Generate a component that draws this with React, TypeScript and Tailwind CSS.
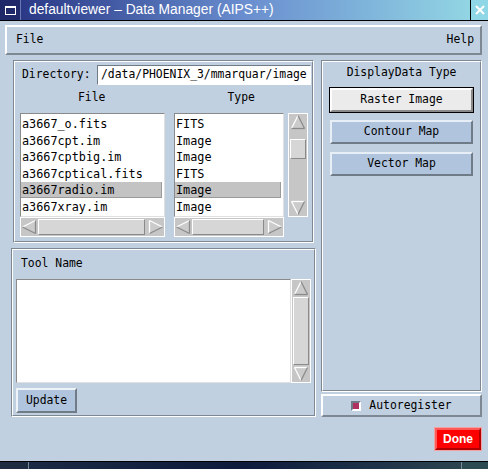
import React from "react";

type Dir = "l" | "r" | "u" | "d";

function Arrow({ dir }: { dir: Dir }) {
  const L = "#ffffff";
  const D = "#8a8a8a";
  const F = "#cbcbcb";
  let content: React.ReactNode = null;
  if (dir === "l") {
    content = (
      <>
        <polygon points="1.5,8 14.5,1.5 14.5,14.5" fill={F} />
        <line x1="1.5" y1="8" x2="14.5" y2="1.5" stroke={L} strokeWidth="1.3" />
        <line x1="1.5" y1="8" x2="14.5" y2="14.5" stroke={D} strokeWidth="1.3" />
        <line x1="14.5" y1="1.5" x2="14.5" y2="14.5" stroke={D} strokeWidth="1.3" />
      </>
    );
  } else if (dir === "r") {
    content = (
      <>
        <polygon points="14.5,8 1.5,1.5 1.5,14.5" fill={F} />
        <line x1="1.5" y1="1.5" x2="14.5" y2="8" stroke={L} strokeWidth="1.3" />
        <line x1="1.5" y1="1.5" x2="1.5" y2="14.5" stroke={L} strokeWidth="1.3" />
        <line x1="1.5" y1="14.5" x2="14.5" y2="8" stroke={D} strokeWidth="1.3" />
      </>
    );
  } else if (dir === "u") {
    content = (
      <>
        <polygon points="8,1.5 1.5,14.5 14.5,14.5" fill={F} />
        <line x1="8" y1="1.5" x2="1.5" y2="14.5" stroke={L} strokeWidth="1.3" />
        <line x1="8" y1="1.5" x2="14.5" y2="14.5" stroke={D} strokeWidth="1.3" />
        <line x1="1.5" y1="14.5" x2="14.5" y2="14.5" stroke={D} strokeWidth="1.3" />
      </>
    );
  } else {
    content = (
      <>
        <polygon points="8,14.5 1.5,1.5 14.5,1.5" fill={F} />
        <line x1="1.5" y1="1.5" x2="14.5" y2="1.5" stroke={L} strokeWidth="1.3" />
        <line x1="1.5" y1="1.5" x2="8" y2="14.5" stroke={L} strokeWidth="1.3" />
        <line x1="14.5" y1="1.5" x2="8" y2="14.5" stroke={D} strokeWidth="1.3" />
      </>
    );
  }
  return (
    <svg width="16" height="16" viewBox="0 0 16 16" className="block shrink-0">
      {content}
    </svg>
  );
}

function Slider({ className }: { className: string }) {
  return (
    <div
      className={
        "bg-[#d6d6d6] border border-t-white border-l-white border-b-[#8a8a8a] border-r-[#8a8a8a] " +
        className
      }
    />
  );
}

function HScroll() {
  return (
    <div className="h-[20px] border border-white bg-[#c6c6c6] flex items-center">
      <Arrow dir="l" />
      <Slider className="flex-1 h-[16px] ml-[1px] mr-[3px]" />
      <Arrow dir="r" />
    </div>
  );
}

function Groove({ className, children }: { className: string; children?: React.ReactNode }) {
  return (
    <div
      className={
        "border border-t-[#7d8893] border-l-[#7d8893] border-b-white border-r-white " + className
      }
    >
      <div className="h-full border border-t-white border-l-white border-b-[#7d8893] border-r-[#7d8893] flex flex-col">
        {children}
      </div>
    </div>
  );
}

function Row({ text, sel }: { text: string; sel?: boolean }) {
  return (
    <div
      className={
        sel
          ? "h-[16.6px] leading-[15px] pt-[1.5px] mr-[2px] pl-[1px] bg-[#c3c3c3] border-b border-r border-[#9a9a9a] whitespace-nowrap"
          : "h-[16.6px] leading-[15px] pt-[1.5px] mr-[2px] pl-[1px] whitespace-nowrap"
      }
    >
      {text}
    </div>
  );
}

function TypeButton({ label, selected }: { label: string; selected?: boolean }) {
  return (
    <div
      className={
        selected
          ? "h-[26px] border border-black"
          : "h-[26px] border border-[#c0d0e0]"
      }
    >
      <div
        className={
          selected
            ? "h-full flex items-center justify-center bg-[#ebebeb] border-2 border-t-white border-l-white border-b-[#8a8a8a] border-r-[#8a8a8a]"
            : "h-full flex items-center justify-center bg-[#b0c4de] border-2 border-t-[#e8eef6] border-l-[#e8eef6] border-b-[#6f7b87] border-r-[#6f7b87]"
        }
      >
        {label}
      </div>
    </div>
  );
}

export default function App() {
  const files = [
    "a3667_o.fits",
    "a3667cpt.im",
    "a3667cptbig.im",
    "a3667cptical.fits",
    "a3667radio.im",
    "a3667xray.im",
  ];
  const types = ["FITS", "Image", "Image", "FITS", "Image", "Image"];
  return (
    <div className="w-[488px] h-[469px] flex flex-col bg-[#c0d0e0] overflow-hidden text-black font-['DejaVu_Sans_Mono',monospace] text-[11.4px]">
      {/* Title bar */}
      <div className="h-[21px] shrink-0 flex border-b border-black">
        <div className="w-[21px] bg-[#1f2868] border-r border-[#6b78b8] flex items-center justify-center">
          <div className="w-[11px] h-[9px] border border-white border-t-2" />
        </div>
        <div className="flex-1 flex items-center pl-[8px] bg-gradient-to-r from-[#2b3886] via-[#6a8ecf] to-[#92d5e3] text-white font-['Liberation_Sans',sans-serif] text-[13.8px] whitespace-nowrap">
          defaultviewer – Data Manager (AIPS++)
        </div>
        <div className="w-[18px] bg-[#8fd6e6] border-l border-black flex items-center justify-center">
          <svg width="10" height="10" viewBox="0 0 10 10" className="block">
            <line x1="1" y1="1" x2="9" y2="9" stroke="white" strokeWidth="2" />
            <line x1="9" y1="1" x2="1" y2="9" stroke="white" strokeWidth="2" />
          </svg>
        </div>
      </div>

      {/* Body */}
      <div className="flex-1 flex flex-col">
        {/* Menu bar */}
        <div className="mt-[4px] ml-[5px] mr-[6px] h-[30px] flex items-center justify-between border-2 border-t-white border-l-white border-b-[#7d8893] border-r-[#7d8893] pl-[9px] pr-[6px]">
          <span>File</span>
          <span>Help</span>
        </div>

        {/* Main */}
        <div className="mt-[5px] ml-[11px] mr-[6px] h-[357px] flex gap-[5px]">
          {/* Left column */}
          <div className="w-[305px] flex flex-col gap-[5px]">
            <Groove className="mx-[2px] h-[183px]">
              <div className="mt-[3px] h-[20px] flex items-center pl-[7px] pr-[1px]">
                <span>Directory:</span>
                <div className="ml-auto w-[214px] h-[20px] bg-white border border-t-[#6f7b87] border-l-[#6f7b87] border-b-white border-r-white flex items-center pl-[3px] whitespace-nowrap overflow-hidden">
                  /data/PHOENIX_3/mmarquar/image
                </div>
              </div>
              <div className="mt-[5px] h-[16px] flex items-center">
                <span className="ml-[63px]">File</span>
                <span className="ml-[122px]">Type</span>
              </div>
              <div className="mt-[7px] flex pl-[5px] text-[11.8px]">
                <div className="w-[145px] flex flex-col">
                  <div className="h-[104px] bg-white border border-t-[#8a8a8a] border-l-[#8a8a8a] border-b-[#e0e0e0] border-r-[#e0e0e0] pt-[1.5px] overflow-hidden">
                    {files.map((f, i) => (
                      <Row key={f} text={f} sel={i === 4} />
                    ))}
                  </div>
                  <HScroll />
                </div>
                <div className="w-[110px] ml-[9px] flex flex-col">
                  <div className="h-[104px] bg-white border border-t-[#8a8a8a] border-l-[#8a8a8a] border-b-[#e0e0e0] border-r-[#e0e0e0] pt-[1.5px] overflow-hidden">
                    {types.map((t, i) => (
                      <Row key={i} text={t} sel={i === 4} />
                    ))}
                  </div>
                  <HScroll />
                </div>
                <div className="ml-[4px] w-[20px] h-[104px] border border-white bg-[#c6c6c6] flex flex-col items-center">
                  <Arrow dir="u" />
                  <div className="flex-1 w-full flex flex-col items-center">
                    <Slider className="mt-[9px] h-[20px] w-[16px]" />
                  </div>
                  <Arrow dir="d" />
                </div>
              </div>
            </Groove>

            <Groove className="h-[169px]">
              <div className="mt-[5px] h-[18px] flex items-center pl-[8px]">Tool Name</div>
              <div className="mt-[6px] h-[104px] flex px-[3px]">
                <div className="flex-1 bg-white border border-t-[#8a8a8a] border-l-[#8a8a8a] border-b-[#e0e0e0] border-r-[#e0e0e0]" />
                <div className="w-[20px] border border-white bg-[#c6c6c6] flex flex-col items-center">
                  <Arrow dir="u" />
                  <Slider className="flex-1 w-[16px] my-[1px]" />
                  <Arrow dir="d" />
                </div>
              </div>
              <div className="mt-[5px] ml-[3px] w-[61px] h-[25px] flex items-center justify-center bg-[#b0c4de] border-2 border-t-[#eef3f8] border-l-[#eef3f8] border-b-[#6f7b87] border-r-[#6f7b87]">
                Update
              </div>
            </Groove>
          </div>

          {/* Right column */}
          <div className="flex-1 flex flex-col gap-[2px]">
            <Groove className="h-[332px]">
              <div className="mt-[3px] h-[16px] flex items-center justify-center">DisplayData Type</div>
              <div className="mt-[6px] mx-[6px] flex flex-col gap-[6px]">
                <TypeButton label="Raster Image" selected />
                <TypeButton label="Contour Map" />
                <TypeButton label="Vector Map" />
              </div>
            </Groove>
            <div className="h-[23px] flex items-center justify-center gap-[8px] border-2 border-t-white border-l-white border-b-[#7d8893] border-r-[#7d8893]">
              <div className="w-[10px] h-[10px] bg-[#b03060] border-2 border-t-[#6f7b87] border-l-[#6f7b87] border-b-white border-r-white" />
              <span>Autoregister</span>
            </div>
          </div>
        </div>

        {/* Done */}
        <div className="mt-[10px] h-[24px] flex justify-end mr-[6px]">
          <div className="w-[48px] h-[24px] border border-[#f4a0a0]">
            <div className="h-full flex items-center justify-center bg-[#ff0000] border-2 border-t-[#ff5a5a] border-l-[#ff5a5a] border-b-[#b00000] border-r-[#b00000] text-white font-bold font-['Liberation_Sans',sans-serif] text-[12px]">
              Done
            </div>
          </div>
        </div>
      </div>

      {/* Bottom strip */}
      <div className="h-[8px] shrink-0 border-t border-black flex">
        <div className="w-[29px] bg-[#1d2c40] border-r border-[#7a8a96]" />
        <div className="flex-1 bg-gradient-to-r from-[#1a2a44] via-[#0d1a3c] to-[#2c4450]" />
        <div className="w-[27px] bg-[#2c4a52] border-l border-[#7a8a96]" />
      </div>
    </div>
  );
}
